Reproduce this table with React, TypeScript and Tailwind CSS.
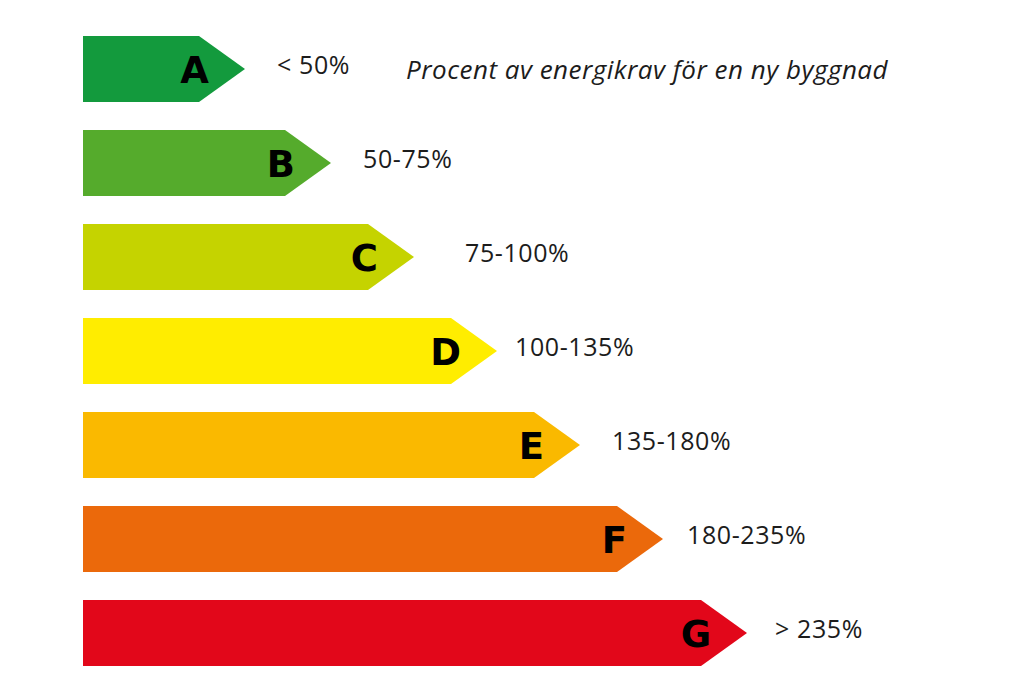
const rows = [
  { letter: "A", label: "< 50%", arrow: "w-[162px] bg-[#139a3d]", gap: "ml-[32px]" },
  { letter: "B", label: "50-75%", arrow: "w-[248px] bg-[#55ab2c]", gap: "ml-[32px]" },
  { letter: "C", label: "75-100%", arrow: "w-[331px] bg-[#c5d300]", gap: "ml-[51px]" },
  { letter: "D", label: "100-135%", arrow: "w-[414px] bg-[#ffed00]", gap: "ml-[18px]" },
  { letter: "E", label: "135-180%", arrow: "w-[497px] bg-[#fab900]", gap: "ml-[32px]" },
  { letter: "F", label: "180-235%", arrow: "w-[580px] bg-[#eb690b]", gap: "ml-[24px]" },
  { letter: "G", label: "> 235%", arrow: "w-[664px] bg-[#e2071a]", gap: "ml-[28px]" },
];

const App = () => {
  return (
    <div className="w-[1024px] h-[682px] bg-white overflow-hidden pt-[36px] pl-[83px] flex flex-col gap-[28px] font-['Open_Sans',sans-serif] text-[#1c1c1c]">
      {rows.map((r) => (
        <div key={r.letter} className="flex items-center h-[66px]">
          <div
            className={`${r.arrow} h-full shrink-0 flex items-center justify-end pr-[36px] [clip-path:polygon(0_0,calc(100%_-_46px)_0,100%_50%,calc(100%_-_46px)_100%,0_100%)]`}
          >
            <span className="font-['DejaVu_Sans',sans-serif] font-bold text-[37px] leading-none text-black pt-[3px]">
              {r.letter}
            </span>
          </div>
          <span className={`${r.gap} mb-2 text-[25px] tracking-[0.6px] whitespace-nowrap`}>{r.label}</span>
          {r.letter === "A" && (
            <span className="ml-[56px] text-[26px] tracking-[0.5px] italic whitespace-nowrap">
              Procent av energikrav för en ny byggnad
            </span>
          )}
        </div>
      ))}
    </div>
  );
};

export default App;
